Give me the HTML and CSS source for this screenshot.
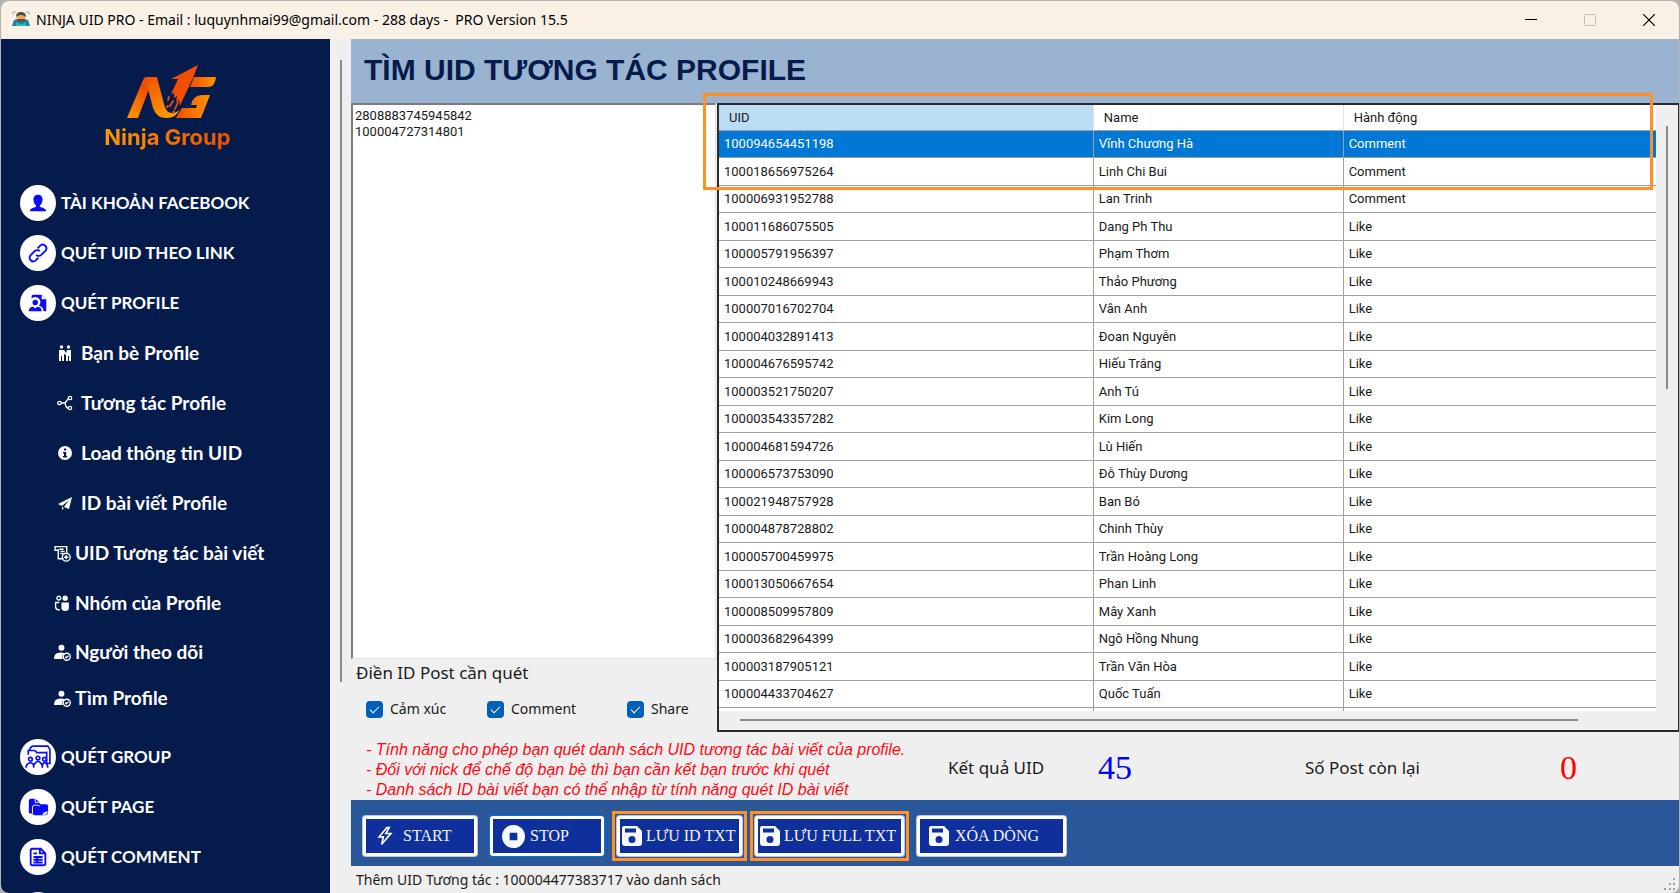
FILE: index.html
```html
<!DOCTYPE html>
<html lang="vi">
<head>
<meta charset="utf-8">
<title>NINJA UID PRO</title>
<link rel="stylesheet" href="styles.css">
</head>
<body>
<div class="window">
  <header class="titlebar">
    <svg class="app-icon" viewBox="0 0 18 18" aria-hidden="true">
      <path d="M1 5V2h3M14 2h3v3" fill="none" stroke="#8db5ae"/>
      <path d="M2 10q7-3 14 0l2 6H0z" fill="#16859a"/>
      <path d="M4 12q5 4 10 0v4H4z" fill="#28b3cb"/>
      <circle cx="9" cy="7" r="4.500" fill="#f3a64c"/>
      <path d="M4 7q0-5 5-5t5 5q-2-2-5-2T4 7z" fill="#4d4a48"/>
      <path d="M5 9h8l-1 3H6z" fill="#555"/>
    </svg>
    <span class="caption">NINJA UID PRO - Email : luquynhmai99@gmail.com - 288 days -&nbsp; PRO Version 15.5</span>
    <div class="win-buttons">
      <button type="button" aria-label="Minimize"><svg viewBox="0 0 12 12"><path d="M0 5.500h12" stroke="#000"/></svg></button>
      <button type="button" aria-label="Maximize" disabled><svg viewBox="0 0 12 12"><rect x=".5" y=".5" width="11" height="11" rx="1" fill="none" stroke="#c3bfb6"/></svg></button>
      <button type="button" aria-label="Close"><svg viewBox="0 0 12 12"><path d="M0 0l12 12M12 0L0 12" stroke="#000" stroke-width="1.200"/></svg></button>
    </div>
  </header>

  <div class="body">
    <aside class="sidebar">
      <div class="logo">
        <svg viewBox="126 64 92 56" role="img" aria-label="NG">
          <defs>
            <linearGradient id="n" x1="0" y1="1" x2=".6" y2="0"><stop offset="0" stop-color="#ff9a00"/><stop offset=".9" stop-color="#f04e00"/></linearGradient>
            <linearGradient id="g" x1="0" y1="0" x2="1" y2="0"><stop offset="0" stop-color="#f04e00"/><stop offset="1" stop-color="#ff9400"/></linearGradient>
            <linearGradient id="m" x1="0" y1="0" x2=".5" y2="1"><stop offset="0" stop-color="#f04e00"/><stop offset="1" stop-color="#ff9800"/></linearGradient>
          </defs>
          <path d="M127 118L143 80q1-3 4-3h3l-1 12-11 29z" fill="url(#n)"/>
          <path d="M146 77h11l7 27q2 9 8 9 5 0 8-4-4 9-13 9-11 0-14-10l-5-19z" fill="url(#m)"/>
          <path d="M198 65l-27 14h7l-7 15 3-1v5l3-2-1 6 3-2 1 6 3-7q1-2 2-4l8-17z" fill="#f04e00"/>
          <path d="M169 97l-1 3M173 101l-3 5M178 102l-3 7M168 106l-1 1M174 111l-1 2" stroke="#f04e00" stroke-width="1.800" stroke-linecap="round"/>
          <path d="M194 77h22q-1 10-8 10h-18z" fill="url(#g)"/>
          <path d="M176 118l6-10h14l1-3h-6q2-10 11-10h8l-9 23z" fill="url(#g)"/>
        </svg>
        <span class="brand">Ninja Group</span>
      </div>
      <nav class="menu">
        <a class="item" href="#"><span class="disc"><svg viewBox="0 0 24 24"><path d="M12 3c3.500 0 5 2.500 5 5.500S15 14 14 15v1c2 1 7 1.500 7 5H3c0-3.500 5-4 7-5v-1c-1-1-3-3.500-3-6.500S8.500 3 12 3z"/></svg></span>TÀI KHOẢN FACEBOOK</a>
        <a class="item" href="#"><span class="disc"><svg viewBox="0 0 24 24" class="line"><path d="M10 14a4 4 0 0 0 5.600 0l4.700-4.700a4 4 0 0 0-5.600-5.600L11.500 7M14 10a4 4 0 0 0-5.600 0l-4.700 4.700a4 4 0 0 0 5.600 5.600l3.200-3.300"/></svg></span>QUÉT UID THEO LINK</a>
        <a class="item" href="#"><span class="disc"><svg viewBox="0 0 24 24"><path d="M5 7V5q0-2 2-2h9l5 5v13h-3q0-5-5-6a5 5 0 0 0-8-8z"/><circle cx="9" cy="11.500" r="3"/><path d="M2 21q0-5 5-5l2 2 2-2q5 0 5 5z"/><path d="M16 3l5 5h-5z" fill="#fff"/></svg></span>QUÉT PROFILE</a>

        <a class="sub" href="#"><svg viewBox="0 0 16 16"><circle cx="4.500" cy="2" r="1.700"/><circle cx="11.500" cy="2" r="1.700"/><path d="M2 5h5l2 3 1-3h4v11h-2v-5h-1v5H9v-6L7 9v7H5v-5H4v5H2z"/></svg>Bạn bè Profile</a>
        <a class="sub" href="#"><svg viewBox="0 0 16 16" class="line"><circle cx="2.500" cy="8" r="1.700"/><circle cx="13" cy="3" r="1.700"/><circle cx="13" cy="13" r="1.700"/><path d="M4 8h4l3-4M8 8q1 5 3 5"/></svg>Tương tác Profile</a>
        <a class="sub" href="#"><svg viewBox="0 0 16 16"><path fill-rule="evenodd" d="M8 1a7 7 0 1 0 0 14A7 7 0 0 0 8 1zM7 3.500h2.200v2H7zM6 7h3.200v4H10v1.500H6V11h1V8.500H6z"/></svg>Load thông tin UID</a>
        <a class="sub" href="#"><svg viewBox="0 0 16 16"><path d="M15 2L1 9l4 2 7-6-5 7v0l5 2zM5 12l2 1-2 2z"/></svg>ID bài viết Profile</a>
        <a class="sub wide" href="#"><svg viewBox="0 0 16 16" class="line"><path d="M4 4V13H9M4 5H1V1.500H12V7M5 4h4M6 6h4M6 8h3"/><circle cx="11.500" cy="11.500" r="3.700"/><path d="M11.500 9.500v4M9.500 11.500h4"/></svg>UID Tương tác bài viết</a>
        <a class="sub wide" href="#"><svg viewBox="0 0 16 16"><circle cx="10.500" cy="3" r="2.500"/><path d="M7 7h7v5q0 3-3.500 3T7 12z"/><path class="line" d="M4.500 1.200a1.700 1.700 0 1 1 0 3.500 1.700 1.700 0 1 1 0-3.500M5 7H1.500v4q0 3 4 3"/></svg>Nhóm của Profile</a>
        <a class="sub wide row-48" href="#"><svg viewBox="0 0 16 16"><circle cx="7" cy="3.500" r="2.800"/><path d="M0 14q0-6 6-6 3 0 4 1-3 1-2 5z"/><circle class="line" cx="12" cy="12" r="3.300"/><path class="line" d="M10.500 12l1 1 2-2"/></svg>Người theo dõi</a>
        <a class="sub wide row-44" href="#"><svg viewBox="0 0 16 16"><circle cx="7" cy="3.500" r="2.800"/><path d="M0 14q0-6 6-6 3 0 4 1-3 1-2 5z"/><circle class="line" cx="12" cy="12" r="3.300"/><path class="line" d="M10.500 12l1 1 2-2"/></svg>Tìm Profile</a>

        <a class="item spaced" href="#"><span class="disc"><svg viewBox="0 0 24 24" class="line big"><path d="M4 6q1-4 4-4h13l2 3v13h-3V7M3 10V6h6l2 2h9"/><circle cx="5" cy="14" r="1.700"/><circle cx="12" cy="13" r="1.700"/><circle cx="18" cy="14" r="1.700"/><path d="M1 22q0-4 4-5 3 1 3 3 1-3 4-4 3 1 4 4 0-2 2-3 3 1 3 5M8 22v-2M16 22v-2"/></svg></span>QUÉT GROUP</a>
        <a class="item" href="#"><span class="disc"><svg viewBox="0 0 24 24"><path d="M2 18V5q0-2 2-2h5l5 4v2h7q2 0 2 2v7q0 3-3 3H9q-2 0-3-2H4q-2 0-2-1z"/><path d="M6 19v-7q0-2 2-2h4l2 1" fill="none" stroke="#fff"/><path d="M9 3v4h5" fill="none" stroke="#fff"/><path d="M17 21q0-4 6-4l-2 4z" fill="#fff"/><path d="M19 21q0-2 3-2z"/></svg></span>QUÉT PAGE</a>
        <a class="item" href="#"><span class="disc"><svg viewBox="0 0 24 24" class="line"><path d="M6 3h9l5 5v11q0 2-2 2H6q-2 0-2-2V5q0-2 2-2zM14 3v5h6M7 8h4M7 12h10M7 15h10M7 18h10M11 12v6"/></svg></span>QUÉT COMMENT</a>
        <a class="item last" href="#" aria-label="Menu"><span class="disc"></span></a>
      </nav>
    </aside>
    <div class="side-scroll"><div class="thumb"></div></div>

    <main class="main">
      <h1 class="page-title">TÌM UID TƯƠNG TÁC PROFILE</h1>

      <section class="work">
        <div class="input-side">
          <textarea class="ids" id="ids" spellcheck="false">2808883745945842
100004727314801</textarea>
          <label class="ids-label" for="ids">Điền ID Post cần quét</label>
          <div class="checks">
            <label><input type="checkbox" checked>Cảm xúc</label>
            <label><input type="checkbox" checked>Comment</label>
            <label><input type="checkbox" checked>Share</label>
          </div>
        </div>

        <div class="grid-panel">
          <div class="grid-area">
            <div class="grid-clip">
              <table class="grid">
                <thead><tr><th class="c-uid">UID</th><th class="c-name">Name</th><th>Hành động</th></tr></thead>
                <tbody>
                  <tr class="selected"><td>100094654451198</td><td>Vĩnh Chương Hà</td><td>Comment</td></tr>
                  <tr><td>100018656975264</td><td>Linh Chi Bui</td><td>Comment</td></tr>
                  <tr><td>100006931952788</td><td>Lan Trinh</td><td>Comment</td></tr>
                  <tr><td>100011686075505</td><td>Dang Ph Thu</td><td>Like</td></tr>
                  <tr><td>100005791956397</td><td>Phạm Thơm</td><td>Like</td></tr>
                  <tr><td>100010248669943</td><td>Thảo Phương</td><td>Like</td></tr>
                  <tr><td>100007016702704</td><td>Vân Anh</td><td>Like</td></tr>
                  <tr><td>100004032891413</td><td>Đoan Nguyễn</td><td>Like</td></tr>
                  <tr><td>100004676595742</td><td>Hiếu Trắng</td><td>Like</td></tr>
                  <tr><td>100003521750207</td><td>Anh Tú</td><td>Like</td></tr>
                  <tr><td>100003543357282</td><td>Kim Long</td><td>Like</td></tr>
                  <tr><td>100004681594726</td><td>Lù Hiến</td><td>Like</td></tr>
                  <tr><td>100006573753090</td><td>Đỗ Thùy Dương</td><td>Like</td></tr>
                  <tr><td>100021948757928</td><td>Ban Bó</td><td>Like</td></tr>
                  <tr><td>100004878728802</td><td>Chinh Thùy</td><td>Like</td></tr>
                  <tr><td>100005700459975</td><td>Trần Hoàng Long</td><td>Like</td></tr>
                  <tr><td>100013050667654</td><td>Phan Linh</td><td>Like</td></tr>
                  <tr><td>100008509957809</td><td>Mây Xanh</td><td>Like</td></tr>
                  <tr><td>100003682964399</td><td>Ngô Hồng Nhung</td><td>Like</td></tr>
                  <tr><td>100003187905121</td><td>Trần Văn Hòa</td><td>Like</td></tr>
                  <tr><td>100004433704627</td><td>Quốc Tuấn</td><td>Like</td></tr>
                  <tr><td></td><td></td><td></td></tr>
                </tbody>
              </table>
            </div>
            <div class="v-scroll"><div class="thumb"></div></div>
          </div>
          <div class="h-scroll"><div class="thumb"></div></div>
          <div class="highlight"></div>
        </div>
      </section>

      <section class="info">
        <p class="notes">- Tính năng cho phép bạn quét danh sách UID tương tác bài viết của profile.<br>- Đối với nick để chế độ bạn bè thì bạn cần kết bạn trước khi quét<br>- Danh sách ID bài viết bạn có thể nhập từ tính năng quét ID bài viết</p>
        <span class="stat-label">Kết quả UID</span>
        <span class="stat blue">45</span>
        <span class="stat-label">Số Post còn lại</span>
        <span class="stat red">0</span>
      </section>

      <section class="toolbar">
        <button type="button" class="btn start"><svg viewBox="0 0 24 24" class="line"><path d="M14 2L5 13h5l-2 9 11-13h-6l4-7z"/></svg>START</button>
        <button type="button" class="btn stop"><svg viewBox="0 0 24 24"><path fill-rule="evenodd" d="M12 0a12 12 0 1 0 0 24 12 12 0 0 0 0-24zM8 8h8v8H8z"/></svg>STOP</button>
        <button type="button" class="btn save-id marked"><svg viewBox="2 2 20 20"><path fill-rule="evenodd" d="M4 2h13l5 5v12q0 3-3 3H5q-3 0-3-3V4q0-2 2-2zM5 4.500v4h11v-4zM12 12a3.500 3.500 0 1 0 0 7 3.500 3.500 0 0 0 0-7z"/></svg>LƯU ID TXT</button>
        <button type="button" class="btn save-full marked"><svg viewBox="2 2 20 20"><path fill-rule="evenodd" d="M4 2h13l5 5v12q0 3-3 3H5q-3 0-3-3V4q0-2 2-2zM5 4.500v4h11v-4zM12 12a3.500 3.500 0 1 0 0 7 3.500 3.500 0 0 0 0-7z"/></svg>LƯU FULL TXT</button>
        <button type="button" class="btn delete"><svg viewBox="2 2 20 20"><path fill-rule="evenodd" d="M4 2h13l5 5v12q0 3-3 3H5q-3 0-3-3V4q0-2 2-2zM5 4.500v4h11v-4zM12 12a3.500 3.500 0 1 0 0 7 3.500 3.500 0 0 0 0-7z"/></svg>XÓA DÒNG</button>
      </section>

      <footer class="status">
        <span>Thêm UID Tương tác : 100004477383717 vào danh sách</span>
        <svg class="grip" viewBox="0 0 12 12" aria-hidden="true"><path d="M9 0h2v2H9zM9 5h2v2H9zM9 10h2v2H9zM5 5h2v2H5zM5 10h2v2H5zM0 10h2v2H0z" fill="#a0a0a0"/></svg>
      </footer>
    </main>
  </div>
</div>
</body>
</html>
```

FILE: styles.css
```css
* {
  box-sizing: border-box;
}

body {
  margin: 0;
  height: 100vh;
  background: #b4b2b0;
  overflow: hidden;
  color: #1a1a1a;
  font-family: "Noto Sans", "Open Sans", sans-serif;
}

button {
  font: inherit;
}

.window {
  height: 100%;
  padding: 1px 1px 0;
  display: flex;
  flex-direction: column;
  border-radius: 8px;
  overflow: hidden;
}

/* Title bar */
.titlebar {
  flex: 0 0 38px;
  display: flex;
  align-items: center;
  background: #f9f0e6;
  border-radius: 8px 8px 0 0;
  padding: 0 1px 2px 11px;
}

.app-icon {
  width: 18px;
  height: 18px;
  margin-right: 6px;
}

.caption {
  flex: 1;
  font-size: 14px;
  color: #000;
}

.win-buttons {
  display: flex;
}

.win-buttons button {
  width: 59px;
  height: 36px;
  padding: 2px 0 0;
  border: 0;
  background: none;
  display: flex;
  align-items: center;
  justify-content: center;
}

.win-buttons svg {
  width: 12px;
  height: 12px;
}

.body {
  flex: 1;
  min-height: 0;
  display: flex;
}

/* Sidebar */
.sidebar {
  flex: 0 0 329px;
  background: #051b4b;
  overflow: hidden;
  border-radius: 0 0 0 8px;
}

.logo {
  height: 139px;
  padding-top: 25px;
  display: flex;
  flex-direction: column;
  align-items: center;
}

.logo svg {
  width: 92px;
  height: 56px;
  margin-left: 12px;
}

.brand {
  margin-left: 4px;
  font: 700 22px/34px Inter, sans-serif;
  color: transparent;
  background: linear-gradient(90deg, #ff9a00, #f04e00);
  background-clip: text;
  -webkit-background-clip: text;
}

.menu {
  display: flex;
  flex-direction: column;
}

.item,
.sub {
  flex: 0 0 50px;
  display: flex;
  align-items: center;
  color: #fff;
  text-decoration: none;
  font: 700 17px/24px Lato, sans-serif;
  white-space: nowrap;
}

.item {
  padding-left: 19px;
  gap: 5px;
}

.item.spaced {
  margin-top: 12px;
}

.item.last {
  margin-top: 3px;
}

.disc {
  width: 36px;
  height: 36px;
  border-radius: 50%;
  background: #fff;
  display: flex;
  align-items: center;
  justify-content: center;
}

.disc svg {
  width: 22px;
  height: 22px;
  fill: #0a0aff;
}

.line {
  fill: none;
  stroke: #fff;
  stroke-width: 1.3;
}

.disc svg.line {
  fill: none;
  stroke: #0a0aff;
  stroke-width: 2;
}

.disc svg.big {
  width: 26px;
  height: 26px;
  stroke-width: 1.5;
}

.sub {
  padding-left: 56px;
  gap: 8px;
  font-size: 19px;
}

.sub svg {
  width: 16px;
  height: 16px;
  fill: #fff;
}

.sub svg.line {
  fill: none;
}

.sub.wide {
  padding-left: 53px;
  gap: 4px;
}

.sub.wide svg {
  width: 17px;
  height: 17px;
}

.sub.row-48 {
  flex-basis: 48px;
}

.sub.row-44 {
  flex-basis: 44px;
}

.side-scroll {
  flex: 0 0 21px;
  background: #efefef;
  padding: 21px 0 211px 10px;
}

.thumb {
  background: #8a8a8a;
}

.side-scroll .thumb {
  width: 2px;
  height: 100%;
}

/* Main column */
.main {
  flex: 1;
  min-width: 0;
  display: flex;
  flex-direction: column;
  background: #efefef;
  border-radius: 0 0 8px 0;
}

.page-title {
  margin: 0;
  flex: 0 0 64px;
  padding: 0 13px;
  background: #9ab3d1;
  color: #051b4b;
  font: 700 30px/62px "Liberation Sans", sans-serif;
}

.work {
  flex: 1;
  min-height: 0;
  display: grid;
  grid-template-columns: 366fr 962fr;
}

.input-side {
  display: flex;
  flex-direction: column;
  min-width: 0;
}

.ids {
  flex: 1;
  margin: 0 1px 0 0;
  padding: 3px 2px;
  resize: none;
  background: #fff;
  border: 1px solid #e3e3e3;
  border-top: 2px solid #7c7c7c;
  border-left: 2px solid #7c7c7c;
  color: #1a1a1a;
  font: 13px/16px Roboto, sans-serif;
  outline: 0;
}

.ids-label {
  padding: 2px 5px 4px;
  font-size: 17px;
  line-height: 24px;
}

.checks {
  display: grid;
  grid-template-columns: 121px 140px auto;
  padding: 7px 15px 10px;
  font-size: 14px;
  line-height: 26px;
}

.checks label {
  display: flex;
  align-items: center;
  gap: 7px;
}

.checks input {
  appearance: none;
  width: 17px;
  height: 17px;
  margin: 0;
  border-radius: 4px;
  background: #005fb8;
  display: grid;
  place-items: center;
}

.checks input::before {
  content: "";
  width: 8px;
  height: 4px;
  margin-top: -2px;
  border-left: 1px solid #fff;
  border-bottom: 1px solid #fff;
  transform: rotate(-45deg);
}

/* Result grid */
.grid-panel {
  position: relative;
  min-width: 0;
  min-height: 0;
  display: flex;
  flex-direction: column;
  border: 2px solid #2b2b2b;
  border-right-width: 1px;
}

.grid-area {
  flex: 1;
  min-height: 0;
  display: flex;
}

.grid-clip {
  flex: 1;
  overflow: hidden;
  background: #fff;
}

.grid {
  width: 100%;
  table-layout: fixed;
  border-collapse: separate;
  border-spacing: 0;
  font: 13px/16px Roboto, sans-serif;
}

.grid th {
  height: 26px;
  padding: 0 10px;
  text-align: left;
  font-weight: 400;
  border-bottom: 1px solid #a0a0a0;
  border-right: 1px solid #e3e3e3;
}

.grid .c-uid {
  width: 40%;
  background: #bcdcf4;
}

.grid .c-name {
  width: calc(80% / 3);
}

.grid td {
  height: 27px;
  padding: 0 5px;
  border-right: 1px solid #a0a0a0;
  border-bottom: 1px solid #a0a0a0;
}

.grid tr:nth-child(even) td {
  height: 28px;
}

.grid th:last-child,
.grid td:last-child {
  border-right: 0;
}

.grid .selected td {
  background: #0078d7;
  color: #fff;
}

.v-scroll {
  flex: 0 0 22px;
  padding-top: 21px;
  background: #efefef;
}

.v-scroll .thumb {
  width: 2px;
  height: 45%;
  margin-left: 10px;
}

.h-scroll {
  flex: 0 0 19px;
  padding: 8px 100px 0 21px;
}

.h-scroll .thumb {
  height: 2px;
}

.highlight {
  position: absolute;
  left: -16px;
  top: -12px;
  right: 25px;
  height: 97px;
  border: 3px solid #ff9021;
}

/* Notes and counters */
.info {
  flex: 0 0 68px;
  display: grid;
  grid-template-columns: 597fr 150fr 207fr 255fr 119fr;
  align-items: center;
}

.notes {
  margin: 0;
  padding: 7px 0 0 15px;
  white-space: nowrap;
  color: #ff0a14;
  font: italic 16px/20px "Liberation Sans", sans-serif;
}

.stat-label {
  padding-top: 4px;
  font-size: 17px;
  line-height: 24px;
}

.stat {
  padding-top: 4px;
  font: 34px/40px "Liberation Serif", serif;
}

.blue {
  color: #0000ff;
}

.red {
  color: #ff0000;
}

/* Action buttons */
.toolbar {
  flex: 0 0 66px;
  display: flex;
  align-items: center;
  padding: 6px 12px 0;
  gap: 13px;
  background: #2a579a;
}

.btn {
  position: relative;
  height: 40px;
  display: flex;
  align-items: center;
  gap: 4px;
  padding: 0 2px;
  border: 3px solid #fff;
  border-radius: 3px;
  box-shadow: 0 0 0 1px #b9c6dd;
  background: #0f309c;
  color: #f3f3fa;
  font: 16px/24px "Liberation Serif", serif;
  white-space: nowrap;
}

.btn svg {
  flex: none;
  width: 20px;
  height: 20px;
  fill: #f8f8ff;
}

.btn svg.line {
  fill: none;
  stroke-width: 2;
}

.btn.start,
.btn.stop {
  width: 114px;
  padding-left: 9px;
  gap: 5px;
}

.btn.start {
  gap: 8px;
}

.btn.stop {
  box-shadow: 0 0 0 1px #0078d7;
}

.btn.stop svg {
  width: 23px;
  height: 23px;
}

.btn.save-id {
  width: 125px;
}

.btn.save-full {
  width: 149px;
}

.btn.delete {
  width: 149px;
  padding-left: 9px;
  gap: 6px;
}

.btn.marked::after {
  content: "";
  position: absolute;
  inset: -8px;
  border: 3px solid #ff9021;
}

.status {
  flex: 0 0 27px;
  display: flex;
  align-items: center;
  justify-content: space-between;
  padding: 0 3px 0 5px;
  font-size: 14px;
}

.grip {
  width: 12px;
  height: 12px;
  margin-top: 8px;
}
```
